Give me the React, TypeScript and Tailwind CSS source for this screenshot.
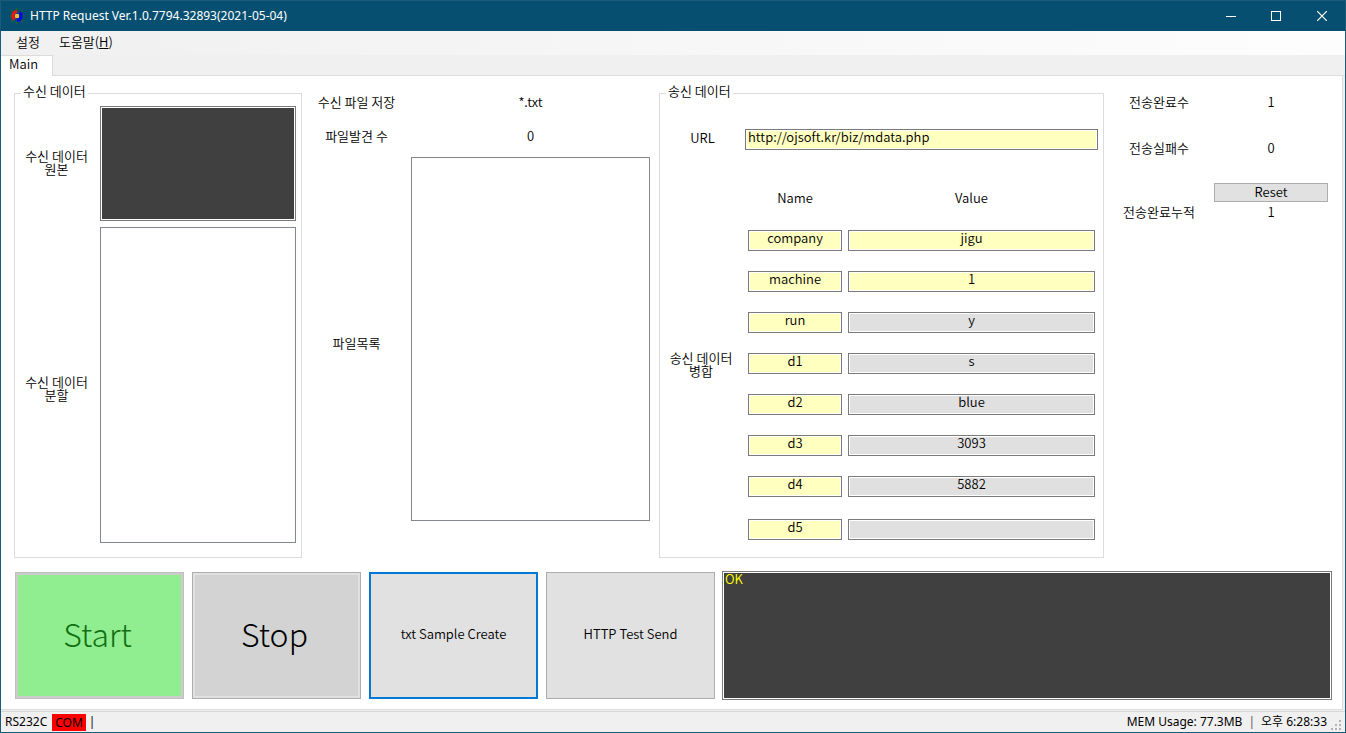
import { useState } from 'react'

type Field = { name: string; value: string; editable?: boolean }

const fields: Field[] = [
  { name: 'company', value: 'jigu', editable: true },
  { name: 'machine', value: '1', editable: true },
  { name: 'run', value: 'y' },
  { name: 'd1', value: 's' },
  { name: 'd2', value: 'blue' },
  { name: 'd3', value: '3093' },
  { name: 'd4', value: '5882' },
  { name: 'd5', value: '' },
]

const inputClass =
  'h-[21px] w-full min-w-0 border border-[#7a7a7a] px-[2px] pb-[6px] leading-[13px] shadow-[inset_0_0_0_1px_#fff] outline-none'

const AppIcon = () => (
  <svg width="16" height="16" viewBox="0 0 16 16" aria-hidden="true">
    <g fill="#12652f">
      <rect x="7" y="0" width="2" height="2" />
      <rect x="2" y="2" width="2" height="2" />
      <rect x="12" y="2" width="2" height="2" />
      <rect x="1" y="7" width="2" height="2" />
      <rect x="13" y="7" width="2" height="2" />
      <rect x="2" y="12" width="2" height="2" />
      <rect x="12" y="12" width="2" height="2" />
      <rect x="7" y="14" width="2" height="2" />
    </g>
    <path d="M8 3.5A4.5 4.5 0 0 0 5.5 11.5" fill="none" stroke="#f01414" strokeWidth="3" />
    <path d="M10.5 4.5A4.5 4.5 0 0 1 8 12.5" fill="none" stroke="#0505f0" strokeWidth="3" />
    <rect x="6" y="6" width="4" height="4" rx="1" fill="#f0c030" />
  </svg>
)

const TitleBar = () => (
  <header className="flex h-[30px] items-center bg-[#074f70] pl-2 font-['Noto_Sans','Noto_Sans_CJK_KR',sans-serif] text-xs text-white">
    <AppIcon />
    <h1 className="ml-[5px] flex-1">HTTP Request Ver.1.0.7794.32893(2021-05-04)</h1>
    <button aria-label="Minimize" className="flex h-full w-[45px] items-center justify-center">
      <svg width="10" height="10" stroke="currentColor">
        <path d="M0 5.5h10" />
      </svg>
    </button>
    <button aria-label="Maximize" className="flex h-full w-[45px] items-center justify-center">
      <svg width="10" height="10" fill="none" stroke="currentColor">
        <rect x="0.5" y="0.5" width="9" height="9" />
      </svg>
    </button>
    <button aria-label="Close" className="flex h-full w-[47px] items-center justify-center">
      <svg width="10" height="10" stroke="currentColor" strokeWidth="1.2">
        <path d="M0 0l10 10M10 0L0 10" />
      </svg>
    </button>
  </header>
)

const MenuBar = () => (
  <nav className="flex h-6 items-center bg-linear-to-r from-[#f0f0f0] to-[#fdfdfd] pb-[2px] pl-[15px] font-[350]">
    <button>설정</button>
    <button className="ml-[19px]">
      도움말(<u>H</u>)
    </button>
  </nav>
)

const ReceivePanel = () => (
  <fieldset className="flex w-[288px] flex-col border border-[#dcdcdc] pr-[5px] pb-[14px]">
    <legend className="ml-[6px] h-[14px] px-[2px] leading-[10px]">수신 데이터</legend>
    <div className="mt-[6px] grid flex-1 grid-cols-[85px_1fr] grid-rows-[115px_1fr] items-center gap-y-[6px] text-center leading-[13px]">
      <label htmlFor="raw" className="pr-[2px] pb-1">
        수신 데이터
        <br />
        원본
      </label>
      <textarea
        id="raw"
        readOnly
        className="h-full w-full resize-none border border-[#7a7a7a] bg-[#404040] shadow-[inset_0_0_0_1px_#fff] outline-none"
      />
      <span className="pt-[6px] pr-[2px]">
        수신 데이터
        <br />
        분할
      </span>
      <div className="h-full border border-[#828790]" />
    </div>
  </fieldset>
)

const FilePanel = () => (
  <section className="mt-[6px] mb-[37px] grid w-[348px] grid-cols-[109px_1fr] grid-rows-[20px_14px_20px_11px_1fr] items-center text-center leading-5">
    <span>수신 파일 저장</span>
    <span>*.txt</span>
    <span className="row-start-3">파일발견 수</span>
    <span className="row-start-3">0</span>
    <span className="row-start-5 pt-2">파일목록</span>
    <div className="row-start-5 h-full border border-[#828790]" />
  </section>
)

const SendPanel = () => (
  <fieldset className="flex min-w-0 flex-1 flex-col border border-[#dcdcdc]">
    <legend className="ml-[6px] h-[14px] px-[2px] leading-[10px]">송신 데이터</legend>
    <div className="mt-[29px] grid grid-cols-[85px_1fr] items-center pr-[5px] text-center">
      <label htmlFor="url" className="pb-1 leading-4">
        URL
      </label>
      <input
        id="url"
        defaultValue="http://ojsoft.kr/biz/mdata.php"
        className={`${inputClass} bg-[#ffffc0]`}
      />
    </div>
    <div className="mt-[38px] flex pr-2">
      <div className="mt-[163px] w-[82px] text-center leading-[13px]">
        송신 데이터
        <br />
        병합
      </div>
      <table className="ml-[6px] min-w-0 flex-1 table-fixed border-collapse text-center">
        <thead>
          <tr className="h-[22px]">
            <th className="w-[94px] p-0 pb-[2px] font-[350]">Name</th>
            <th className="p-0 pb-[2px] pl-[6px] font-[350]">Value</th>
          </tr>
        </thead>
        <tbody>
          {fields.map(({ name, value, editable }) => (
            <tr key={name} className="h-[41px] last:h-[43px]">
              <td className="p-0 align-bottom">
                <input
                  aria-label={`${name} name`}
                  defaultValue={name}
                  className={`${inputClass} block bg-[#ffffc0] text-center`}
                />
              </td>
              <td className="p-0 pl-[6px] align-bottom">
                <input
                  aria-label={`${name} value`}
                  defaultValue={value}
                  readOnly={!editable}
                  className={`${inputClass} block text-center ${editable ? 'bg-[#ffffc0]' : 'bg-[#e0e0e0]'}`}
                />
              </td>
            </tr>
          ))}
        </tbody>
      </table>
    </div>
  </fieldset>
)

const CountPanel = () => {
  const [total, setTotal] = useState(1)

  return (
    <section className="mt-[6px] grid w-[238px] grid-cols-[110px_1fr] content-start pr-[14px] text-center leading-5">
      <span>전송완료수</span>
      <span>1</span>
      <span className="mt-[26px]">전송실패수</span>
      <span className="mt-[26px]">0</span>
      <button
        onClick={() => setTotal(0)}
        className="col-start-2 mt-[25px] h-[19px] border border-[#adadad] bg-[#e1e1e1] pb-[2px] leading-[15px]"
      >
        Reset
      </button>
      <span className="col-start-1">전송완료누적</span>
      <span>{total}</span>
    </section>
  )
}

const ActionBar = () => (
  <div className="mt-[13px] flex h-[129px] gap-2 pr-[10px] pl-[1px]">
    <div className="flex gap-2 py-[1px]">
      <button
        disabled
        className="w-[169px] border border-[#bfbfbf] bg-[#90ee90] pr-1 pb-[6px] text-[32px] font-light text-[#107010] shadow-[inset_0_0_0_2px_#cccccc]"
      >
        Start
      </button>
      <button className="w-[169px] border border-[#adadad] bg-[#d3d3d3] pr-1 pb-[6px] text-[32px] font-light shadow-[inset_0_0_0_2px_#e1e1e1]">
        Stop
      </button>
      <button className="w-[169px] border-2 border-[#0078d7] bg-[#e1e1e1] pb-[3px]">txt Sample Create</button>
      <button className="w-[169px] border border-[#adadad] bg-[#e1e1e1] pb-[3px]">HTTP Test Send</button>
    </div>
    <textarea
      aria-label="Response"
      readOnly
      defaultValue="OK"
      className="-ml-[1px] min-w-0 flex-1 resize-none border border-[#7a7a7a] bg-[#404040] px-[2px] leading-[14px] text-[#ffff00] shadow-[inset_0_0_0_1px_#fff] outline-none"
    />
  </div>
)

const StatusBar = () => (
  <footer className="mt-[1px] flex h-[21px] items-center border-t border-[#d7d7d7] bg-[#f0f0f0] pr-[2px] pl-1 font-['Noto_Sans','Noto_Sans_CJK_KR',sans-serif] text-xs">
    <span>RS232C</span>
    <span className="ml-[5px] bg-[#ff0000] px-[3px] leading-[17px]">COM</span>
    <span className="ml-[3px]">|</span>
    <span className="ml-auto">MEM Usage: 77.3MB</span>
    <span className="mx-[6px] text-[#555]">|</span>
    <span>오후 6:28:33</span>
    <svg width="12" height="12" className="ml-1 self-end" fill="#b4b4b4" aria-hidden="true">
      <path d="M8 0h2v2h-2zM4 4h2v2h-2zM8 4h2v2h-2zM0 8h2v2h-2zM4 8h2v2h-2zM8 8h2v2h-2z" />
    </svg>
  </footer>
)

export default function App() {
  return (
    <div className="flex min-h-screen flex-col border border-[#1b5a78] bg-[#f0f0f0] font-['Noto_Sans_CJK_KR',sans-serif] text-[13px] text-black">
      <TitleBar />
      <MenuBar />
      <div className="flex h-[21px]">
        <button className="w-[52px] border-t border-r border-[#dcdcdc] bg-white pr-[6px] pb-1 leading-4 font-[350]">
          Main
        </button>
        <div className="flex-1 border-b border-[#dcdcdc]" />
      </div>
      <main className="mr-[2px] flex flex-1 flex-col border-r border-b border-[#dcdcdc] bg-white pb-[9px] pl-[13px] font-[350]">
        <div className="flex flex-1 pt-[10px]">
          <ReceivePanel />
          <FilePanel />
          <div className="w-[9px]" />
          <SendPanel />
          <CountPanel />
        </div>
        <ActionBar />
      </main>
      <StatusBar />
    </div>
  )
}
